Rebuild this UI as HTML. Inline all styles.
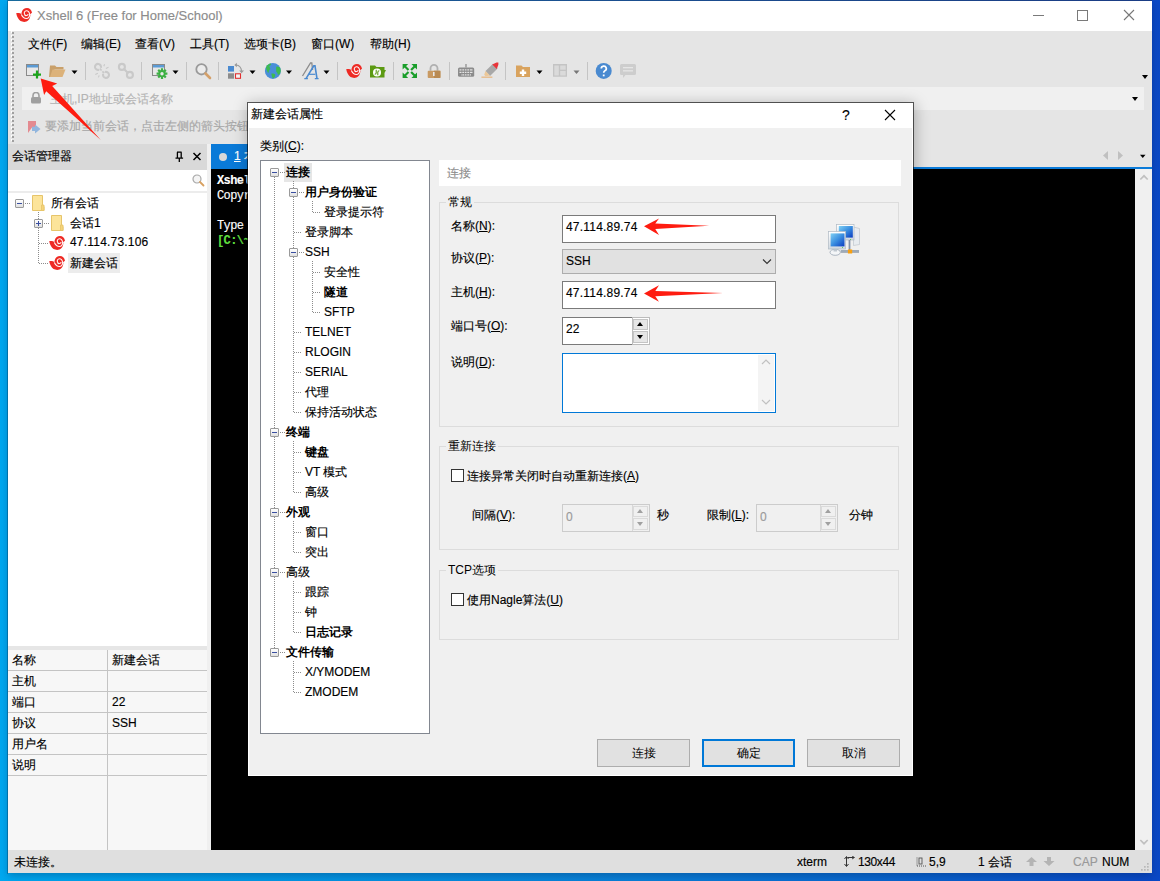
<!DOCTYPE html>
<html><head><meta charset="utf-8">
<style>
*{box-sizing:border-box;margin:0;padding:0}
html,body{width:1160px;height:881px;overflow:hidden}
body{position:relative;font-family:"Liberation Sans",sans-serif;font-size:12px;color:#000;background:linear-gradient(90deg,#00a8f0 0%,#0494e2 30%,#0a80d8 55%,#0a62ce 80%,#0a48c6 100%)}
.a{position:absolute}
.t{position:absolute;white-space:nowrap;line-height:14px;-webkit-text-stroke:0.15px currentColor}
.b{font-weight:bold;-webkit-text-stroke:0}
.g{color:#6d6d6d}
.dd{position:absolute;width:0;height:0;border-left:3px solid transparent;border-right:3px solid transparent;border-top:4px solid #000}
.sep{position:absolute;top:62px;width:1px;height:18px;background:#c4c4c4}
.u{text-decoration:underline}
.vd{position:absolute;width:1px;background:repeating-linear-gradient(180deg,#8c8c8c 0 1px,transparent 1px 2px)}
.hd{position:absolute;height:1px;background:repeating-linear-gradient(90deg,#8c8c8c 0 1px,transparent 1px 2px)}
.ebox{position:absolute;width:9px;height:9px;border:1px solid #9a9a9a;border-radius:1px;background:linear-gradient(180deg,#fff,#e0e0e0)}
.ebox:after{content:"";position:absolute;left:1px;top:3px;width:5px;height:1px;background:#3a4fa0}
.ebox.p:before{content:"";position:absolute;left:3px;top:1px;width:1px;height:5px;background:#3a4fa0}
.grp{position:absolute;border:1px solid #dcdcdc}
.gl{position:absolute;background:#f0f0f0;padding:0 2px;line-height:14px;white-space:nowrap}
.btn{position:absolute;width:93px;height:28px;background:#e1e1e1;border:1px solid #adadad;text-align:center;line-height:26px}
</style></head><body>
<!-- window frame -->
<div class="a" style="left:8px;top:1px;width:1144px;height:872px;background:#e5e5e5;box-shadow:0 3px 8px rgba(0,20,60,0.28)"></div>
<div class="a" style="left:8px;top:0;width:1144px;height:1px;background:linear-gradient(90deg,#176a9c,#1a5090 50%,#1a3c84)"></div>
<div class="a" style="left:7px;top:0;width:1px;height:874px;background:rgba(0,30,60,0.3)"></div>
<!-- title bar -->
<div class="a" style="left:8px;top:1px;width:1144px;height:30px;background:#fff"></div>
<svg class="a" style="left:16px;top:8px" width="16" height="14" viewBox="0 0 16 14"><g id="xsl"><path d="M0.3 5 C1.5 4.9 3 4.9 4 5.3 C4.8 5.6 5.2 6.2 5.5 6.5 C5.4 5.5 5.5 4.8 5.8 4 C6.5 1.6 8.5 0 11 0 C13.5 0 15.5 2 16 4.7 L14 6.2 C14.5 7 14.3 7.6 14.2 8.2 C13.8 11.5 11.5 13.9 8.2 13.9 C5.5 13.9 3.2 12.5 2.1 10.3 C1.2 8.8 0.3 6.5 0.3 5 Z" fill="#ee2a24"/><path d="M5.3 6.4 C6.5 8.8 8.5 10.4 10.3 10.4 C12.5 10.4 13.6 8.5 13.6 6.5 C13.6 4 11.8 2.5 10.3 2.7 C8.8 2.9 8.1 4.5 8.3 5.4 C8.5 6.8 9.5 7.7 10.4 7.6 C11.4 7.5 12.1 6.6 12.1 6" fill="none" stroke="#fff" stroke-width="1.05" opacity="0.95"/></g></svg>
<div class="t" style="left:37px;top:9px;font-size:13px;color:#8c8c8c">Xshell 6 (Free for Home/School)</div>
<div class="a" style="left:1033px;top:15px;width:11px;height:1px;background:#7a7a7a"></div>
<div class="a" style="left:1077px;top:10px;width:11px;height:11px;border:1px solid #7a7a7a"></div>
<svg class="a" style="left:1123px;top:9px" width="12" height="12"><path d="M1 1L11 11M11 1L1 11" stroke="#777" stroke-width="1.1"/></svg>

<!-- grip -->
<div class="a" style="left:11px;top:31px;width:1px;height:110px;background:repeating-linear-gradient(180deg,#fff 0 2px,transparent 2px 4px)"></div>
<div class="a" style="left:12px;top:32px;width:2px;height:110px;background:repeating-linear-gradient(180deg,#a0a0a0 0 2px,transparent 2px 4px)"></div>
<!-- menu bar -->
<div class="t" style="left:28px;top:37px">文件(F)</div>
<div class="t" style="left:81px;top:37px">编辑(E)</div>
<div class="t" style="left:135px;top:37px">查看(V)</div>
<div class="t" style="left:190px;top:37px">工具(T)</div>
<div class="t" style="left:244px;top:37px">选项卡(B)</div>
<div class="t" style="left:311px;top:37px">窗口(W)</div>
<div class="t" style="left:370px;top:37px">帮助(H)</div>
<!-- toolbar icons -->
<svg class="a" style="left:0;top:0" width="700" height="100">
<!-- new session -->
<rect x="26.5" y="64.5" width="12" height="11" fill="#e8e8e8" stroke="#8a8a8a"/>
<rect x="27" y="65" width="11" height="2.5" fill="#5b9bd5"/>
<rect x="33" y="73.5" width="8" height="2.2" fill="#1aa51a"/>
<rect x="35.9" y="70.5" width="2.2" height="8" fill="#1aa51a"/>
<!-- open folder -->
<path d="M50 65.5 h5 l1.5 1.5 h7 v2.5 h-9 l-2.5 7.5 h-3z" fill="#c9a06a"/>
<path d="M52.5 69.5 h13 l-3 7.5 h-12.5z" fill="#dcb27a"/>
<path d="M71.5 70.5 h6 l-3 3.5z" fill="#000"/>
<!-- disconnect -->
<g fill="none" stroke="#c9c9c9" stroke-width="2.1">
<path d="M100.82 67.93 A3 3 0 1 0 99.03 69.72"/><path d="M103.18 73.87 A3 3 0 1 0 104.97 72.08"/>
<path d="M99.8 68.7 l1.8 1.8M104.2 73.1 l-1.8 -1.8" stroke-width="1.7"/>
<path d="M104.6 64.2 l-0.8 2M108.5 67.2 l-2.6 1.2M95.3 74.5 l2.6 -1.2M98.4 77.4 l0.8 -2" stroke-width="1.1"/>
</g>
<!-- link -->
<g fill="none" stroke="#c9c9c9" stroke-width="2.1">
<circle cx="121.9" cy="66.9" r="3"/><circle cx="129.9" cy="74.9" r="3"/><path d="M123.5 68.5 l4.8 4.8"/>
</g>
<!-- session props -->
<rect x="152.5" y="64.5" width="12" height="11" fill="#e8e8e8" stroke="#8a8a8a"/>
<rect x="153" y="65" width="11" height="2.5" fill="#5b9bd5"/>
<g transform="translate(162,73.7)">
<circle r="3.6" fill="#3cb043"/>
<path d="M-1.1 -5.4h2.2v10.8h-2.2zM-5.4 -1.1h10.8v2.2h-10.8z" fill="#3cb043"/>
<path d="M-1.1 -5.4h2.2v10.8h-2.2zM-5.4 -1.1h10.8v2.2h-10.8z" fill="#3cb043" transform="rotate(45)"/>
<circle r="1.7" fill="#e8e8e8"/>
</g>
<path d="M172.5 70.5 h6 l-3 3.5z" fill="#000"/>
<!-- magnifier -->
<circle cx="201.5" cy="69.3" r="5.2" fill="#ececec" stroke="#9a9a9a" stroke-width="1.8"/>
<path d="M205.5 73.5 l4.5 4.5" stroke="#d4a06a" stroke-width="2.6" stroke-linecap="round"/>
<!-- layout -->
<rect x="228" y="66" width="6" height="5.6" fill="#4a8ad0"/>
<rect x="228" y="73.3" width="6" height="5.4" fill="#8c8c8c"/>
<rect x="235.5" y="73.8" width="5" height="4.5" fill="#f4f4f4" stroke="#e03030" stroke-width="1.1"/>
<path d="M236 65 q5 0.5 5.6 6" fill="none" stroke="#9a9a9a" stroke-width="1.2"/>
<path d="M234.3 65 l2.6 -2.2 v4.4z" fill="#9a9a9a"/>
<path d="M239.2 70.6 h4.8 l-2.4 2.6z" fill="#9a9a9a"/>
<path d="M249.5 70.5 h6 l-3 3.5z" fill="#000"/>
<!-- globe -->
<clipPath id="gc"><circle cx="272.9" cy="70.9" r="8"/></clipPath>
<circle cx="272.9" cy="70.9" r="8" fill="#4a8fd9"/>
<g clip-path="url(#gc)" fill="#3dbb4f">
<path d="M266.5 64 c1.5 -0.8 3.5 -1 4.5 -0.5 c0.5 1 -0.5 2 -1.5 2.5 c-0.5 0.8 0.5 1.5 0.8 2.5 c0.2 1 -0.8 1.2 -1.2 2 c-0.3 0.8 -0.2 2 -0.8 2.5 c-0.8 -0.8 -1.5 -2.5 -2 -4 c-0.3 -1.5 -0.2 -3.5 0.2 -5z"/>
<path d="M276.5 66.5 c1.5 0 3 0.5 4 1.5 c0.5 1.5 0.5 3.5 0 5 c-0.8 1 -1.5 1.5 -2.5 2 c-0.5 -0.8 -0.3 -2 -1 -2.5 c-0.8 -0.5 -1 -1.5 -0.8 -2.5 c0.2 -1 -0.5 -1.5 0.3 -3.5z"/>
<path d="M271.5 73.5 c1.2 -0.3 2.8 0 3.5 0.8 c0.5 0.8 0 2 -0.5 3 c-0.5 0.8 -1.2 1 -2 1 c-0.3 -1 -0.5 -2 -0.8 -3 c-0.2 -0.8 -0.5 -1.5 -0.2 -1.8z"/>
</g>
<path d="M286 70.5 h6 l-3 3.5z" fill="#000"/>
<!-- font A -->
<path d="M302.5 76 L310.5 63 L311.8 63 L312.6 70" fill="none" stroke="#8c8c8c" stroke-width="1.3"/>
<path d="M306 78.6 L313.8 65.8 L315 65.8 L317 78.6" fill="none" stroke="#4a8ad0" stroke-width="1.6"/>
<path d="M309 74.3 h6.3" stroke="#4a8ad0" stroke-width="1.2"/>
<path d="M304.3 78.6 h3.6M314.8 78.6 h3.8" stroke="#4a8ad0" stroke-width="1.2"/>
<path d="M323.5 70.5 h6 l-3 3.5z" fill="#000"/>
<!-- xshell -->
<use href="#xsl" transform="translate(346,64)"/>
<!-- xftp -->
<path d="M370 65.5 h5 l1.5 1.5 h8 v3 l1.5 0 l-1.5 3 v4.5 h-14.5z" fill="#5c9a12"/>
<circle cx="377" cy="72.5" r="4" fill="#fff"/>
<path d="M376.2 69.8 v3 a1.5 1.5 0 0 1 -1.5 1.5M377.8 75.2 v-3 a1.5 1.5 0 0 1 1.5 -1.5" fill="none" stroke="#5c9a12" stroke-width="1.1"/>
<!-- fullscreen -->
<g fill="#1a9e2a" stroke="#1a9e2a">
<path d="M402.6 64 h5.6 l-5.6 5.6z" stroke="none"/><path d="M404.5 66 l4 4" stroke-width="2.2" fill="none"/>
<path d="M417 64 h-5.6 l5.6 5.6z" stroke="none"/><path d="M415.1 66 l-4 4" stroke-width="2.2" fill="none"/>
<path d="M402.6 78 h5.6 l-5.6 -5.6z" stroke="none"/><path d="M404.5 76 l4 -4" stroke-width="2.2" fill="none"/>
<path d="M417 78 h-5.6 l5.6 -5.6z" stroke="none"/><path d="M415.1 76 l-4 -4" stroke-width="2.2" fill="none"/>
</g>
<!-- lock -->
<path d="M430.5 70.8 v-2.5 a3.5 3.5 0 0 1 7 0 v2.5" fill="none" stroke="#b0b0b0" stroke-width="1.8"/>
<rect x="427.7" y="70.7" width="12.7" height="7.3" rx="1" fill="#c99a62"/>
<rect x="434" y="70.7" width="6.4" height="7.3" fill="#b98a52"/>
<rect x="433" y="72" width="1.6" height="4" fill="#e8e8e8"/>
<!-- keyboard -->
<path d="M466 64 v3.5" stroke="#808080" stroke-width="1.1"/>
<rect x="458" y="67.6" width="16.2" height="9.2" rx="1.5" fill="#8c8c8c"/>
<g fill="#e6e6e6"><rect x="459.5" y="69.3" width="13" height="1.2"/><rect x="459.5" y="71.8" width="13" height="1.2"/><rect x="461" y="74.3" width="10" height="1.2"/></g>
<g fill="#8c8c8c"><rect x="461.5" y="69" width="0.8" height="6.8"/><rect x="464" y="69" width="0.8" height="6.8"/><rect x="466.5" y="69" width="0.8" height="6.8"/><rect x="469" y="69" width="0.8" height="6.8"/></g>
<!-- highlighter -->
<path d="M485.5 71 L493 63.8 L497.6 68.4 L490 76z" fill="#a8a8a8"/>
<path d="M492.3 64.5 L496.5 62.6 L498.4 62.6 L498.4 64.6 L496.8 69z" fill="#e8343a"/>
<path d="M485.5 71 L490 75.5 L485.5 76.2 L484.2 74.8z" fill="#ecc898"/>
<rect x="481.4" y="76.6" width="11" height="1.1" fill="#e8b070"/>
<!-- folder plus -->
<path d="M516 65.5 h5.5 l1.5 1.5 h7 v10 h-14z" fill="#d9a35e"/>
<path d="M521.8 69.5 h2.4 v2 h2 v2.4 h-2 v2 h-2.4 v-2 h-2 v-2.4 h2z" fill="#fff"/>
<path d="M536.5 70.5 h6 l-3 3.5z" fill="#000"/>
<!-- layout gray -->
<rect x="553" y="64" width="14" height="12.7" fill="#c4c4c4"/>
<rect x="554.3" y="65.5" width="4.5" height="10" fill="#dadada"/>
<rect x="560.2" y="65.5" width="5.5" height="4.2" fill="#dadada"/>
<rect x="560.2" y="71" width="5.5" height="4.5" fill="#dadada"/>
<path d="M573.5 70.5 h6 l-3 3.5z" fill="#777"/>
<!-- help -->
<circle cx="603.7" cy="70.9" r="8" fill="#4a8ad0"/>
<path d="M601.3 68.6 a2.5 2.5 0 1 1 3.6 2.2 c-0.9 0.5 -1.2 1 -1.2 2" fill="none" stroke="#fff" stroke-width="1.7"/>
<rect x="602.8" y="74.5" width="1.8" height="1.8" fill="#fff"/>
<!-- chat -->
<path d="M621.5 64 h13 a1.5 1.5 0 0 1 1.5 1.5 v8 a1.5 1.5 0 0 1 -1.5 1.5 h-9 l-2.5 3 v-3 h-1.5 a1.5 1.5 0 0 1 -1.5 -1.5 v-8 a1.5 1.5 0 0 1 1.5 -1.5z" fill="#cdcdcd"/>
<rect x="623" y="67" width="10" height="1.3" fill="#e6e6e6"/><rect x="623" y="70.2" width="10" height="1.3" fill="#e6e6e6"/>
<!-- overflow -->
</svg>
<div class="sep" style="left:85px"></div>
<div class="sep" style="left:141px"></div>
<div class="sep" style="left:186px"></div>
<div class="sep" style="left:218px"></div>
<div class="sep" style="left:337px"></div>
<div class="sep" style="left:393px"></div>
<div class="sep" style="left:449px"></div>
<div class="sep" style="left:505px"></div>
<div class="sep" style="left:587px"></div>
<div class="dd" style="left:1142px;top:75px"></div>

<!-- address bar -->
<div class="a" style="left:22px;top:87px;width:1122px;height:23px;background:#f0f0f0"></div>
<svg class="a" style="left:30px;top:92px" width="12" height="12"><path d="M3 5 v-1.5 a3 3 0 0 1 6 0 v1.5" fill="none" stroke="#a0a0a0" stroke-width="1.6"/><rect x="1" y="5" width="10" height="6.5" rx="1.5" fill="#a0a0a0"/></svg>
<div class="t" style="left:50px;top:92px;color:#b4b4b4">主机,IP地址或会话名称</div>
<div class="dd" style="left:1132px;top:97px"></div>
<!-- link bar -->
<svg class="a" style="left:28px;top:121px" width="14" height="14"><path d="M0 0 h8 v10 l-4 -3.5 l-4 5.6z" fill="#e38a90"/><path d="M4 5.8 h3 v-2.3 l5.5 4.4 l-5.5 4.7 v-2.5 h-3z" fill="#92b6de"/></svg>
<div class="t" style="left:45px;top:119px;color:#a8a8a8">要添加当前会话，点击左侧的箭头按钮。</div>
<!-- session manager -->
<div class="a" style="left:8px;top:144px;width:199px;height:26px;background:#d9d9d9"></div>
<div class="t" style="left:12px;top:149px">会话管理器</div>
<svg class="a" style="left:174px;top:151px" width="30" height="12"><path d="M3 1.2 h4.6 M3.4 1.2 v5.6 M7.2 1.2 v5.6 M1.5 7.2 h7.6 M5.3 7.2 v3.8" fill="none" stroke="#000" stroke-width="1.3"/><path d="M19.5 2 l7 7 M26.5 2 l-7 7" stroke="#000" stroke-width="1.5"/></svg>
<div class="a" style="left:8px;top:170px;width:199px;height:21px;background:#fff"></div>
<svg class="a" style="left:192px;top:174px" width="13" height="13"><circle cx="5" cy="5" r="4" fill="#f4f4f4" stroke="#a8a8a8" stroke-width="1.2"/><path d="M8 8 l3.5 3.5" stroke="#d8a060" stroke-width="1.8" stroke-linecap="round"/></svg>
<div class="a" style="left:8px;top:191px;width:199px;height:2px;background:#ececec"></div>
<div class="a" style="left:8px;top:193px;width:199px;height:453px;background:#fff"></div>
<!-- tree -->
<div class="ebox" style="left:15px;top:199px"></div>
<div class="hd" style="left:25px;top:203px;width:6px"></div>
<svg class="a" style="left:31px;top:195px" width="16" height="16"><path d="M1.5 0.5 h10 v10 l1.5 1 v4 h-11.5z" fill="#fce49a" stroke="#e6c46a"/><path d="M10.5 10 h2.5 v5.5 h-2.5z" fill="#f6d47a" stroke="#e6c46a" stroke-width="0.8"/></svg>
<div class="t" style="left:51px;top:196px">所有会话</div>
<div class="vd" style="left:38px;top:212px;height:52px"></div>
<div class="ebox p" style="left:34px;top:219px"></div>
<div class="hd" style="left:44px;top:223px;width:6px"></div>
<svg class="a" style="left:51px;top:215px" width="16" height="16"><path d="M0.5 0.5 h10 v10 l1.5 1 v4 h-11.5z" fill="#fce49a" stroke="#e6c46a"/><path d="M9.5 10 h2.5 v5.5 h-2.5z" fill="#f6d47a" stroke="#e6c46a" stroke-width="0.8"/></svg>
<div class="t" style="left:70px;top:216px">会话1</div>
<div class="hd" style="left:39px;top:243px;width:10px"></div>
<svg class="a" style="left:49px;top:236px" width="16" height="14" viewBox="0 0 16 14"><use href="#xsl"/></svg>
<div class="t" style="left:70px;top:235px;letter-spacing:0.2px">47.114.73.106</div>
<div class="hd" style="left:39px;top:263px;width:10px"></div>
<svg class="a" style="left:49px;top:256px" width="16" height="14" viewBox="0 0 16 14"><use href="#xsl"/></svg>
<div class="a" style="left:68px;top:253px;width:52px;height:20px;background:#ececec"></div>
<div class="t" style="left:70px;top:256px">新建会话</div>

<!-- properties grid -->
<div class="a" style="left:8px;top:646px;width:199px;height:4px;background:#e6e6e6"></div>
<div class="a" style="left:8px;top:650px;width:199px;height:200px;background:#f7f7f7"></div>
<div class="a" style="left:107px;top:650px;width:1px;height:200px;background:#c4c4c4"></div>
<div class="a" style="left:8px;top:670px;width:199px;height:1px;background:#c4c4c4"></div>
<div class="a" style="left:8px;top:691px;width:199px;height:1px;background:#c4c4c4"></div>
<div class="a" style="left:8px;top:712px;width:199px;height:1px;background:#c4c4c4"></div>
<div class="a" style="left:8px;top:733px;width:199px;height:1px;background:#c4c4c4"></div>
<div class="a" style="left:8px;top:754px;width:199px;height:1px;background:#c4c4c4"></div>
<div class="a" style="left:8px;top:775px;width:199px;height:1px;background:#c4c4c4"></div>
<div class="t" style="left:12px;top:653px">名称</div><div class="t" style="left:112px;top:653px">新建会话</div>
<div class="t" style="left:12px;top:674px">主机</div>
<div class="t" style="left:12px;top:695px">端口</div><div class="t" style="left:112px;top:695px">22</div>
<div class="t" style="left:12px;top:716px">协议</div><div class="t" style="left:112px;top:716px">SSH</div>
<div class="t" style="left:12px;top:737px">用户名</div>
<div class="t" style="left:12px;top:758px">说明</div>

<!-- splitter -->
<div class="a" style="left:207px;top:144px;width:4px;height:706px;background:#f0f0f0"></div>
<!-- tab bar -->
<div class="a" style="left:211px;top:144px;width:941px;height:24px;background:#e5e5e5"></div>
<div class="a" style="left:211px;top:144px;width:80px;height:24px;background:#0a7ad8"></div>
<div class="a" style="left:219px;top:153px;width:8px;height:8px;border-radius:50%;background:#d8d8d8"></div>
<div class="t" style="left:234px;top:149px;color:#fff"><span class="u">1</span> 本地Shell</div>
<svg class="a" style="left:1100px;top:150px" width="50" height="12"><path d="M8 1 v9 l-5 -4.5z" fill="#c0c0c0"/><path d="M18 1 v9 l5 -4.5z" fill="#c0c0c0"/><path d="M40 4.7 h5.5 l-2.75 3.3z" fill="#000"/></svg>
<div class="a" style="left:211px;top:167px;width:941px;height:2px;background:#0a7ad8"></div>
<!-- terminal -->
<div class="a" style="left:211px;top:169px;width:924px;height:681px;background:#000"></div>
<div class="t" style="left:217px;top:174px;font-family:'Liberation Mono',monospace;font-size:12px;letter-spacing:-0.6px;line-height:15px;color:#fff;white-space:pre"><b>Xshell 6 (Build 0189)</b>
Copyright (c) 2002 NetSarang Computer, Inc. All rights reserved.

Type `help' to learn how to use Xshell prompt.
<span style="color:#5fdf3f;font-weight:bold">[C:\~]$</span></div>
<div class="a" style="left:1135px;top:169px;width:17px;height:681px;background:#f0f0f0"></div>
<svg class="a" style="left:1138px;top:172px" width="12" height="678"><path d="M2.3 7.5 l3.7 -3.7 l3.7 3.7" fill="none" stroke="#c0c0c0" stroke-width="1.7"/><path d="M2.3 668 l3.7 3.7 l3.7 -3.7" fill="none" stroke="#c0c0c0" stroke-width="1.7"/></svg>
<!-- status bar -->
<div class="a" style="left:8px;top:850px;width:1144px;height:23px;background:#dfdfdf"></div>
<div class="t" style="left:14px;top:855px">未连接。</div>
<div class="t" style="left:797px;top:855px">xterm</div>
<svg class="a" style="left:844px;top:856px" width="12" height="12"><path d="M2.5 1 v9" stroke="#333" stroke-width="1"/><path d="M0.5 3 l2 -2.5 l2 2.5M0.5 8 l2 2.5 l2 -2.5" fill="none" stroke="#333" stroke-width="1"/><path d="M4 1.5 h6" stroke="#333"/><path d="M8 0 l2.5 1.5 l-2.5 1.5" fill="none" stroke="#333" stroke-width="0.9"/></svg>
<div class="t" style="left:858px;top:855px;letter-spacing:-0.4px">130x44</div>
<svg class="a" style="left:916px;top:857px" width="12" height="10"><path d="M1 0.5 v8.5 M1 9 h10" stroke="#555" stroke-dasharray="1 1"/><rect x="3" y="1" width="3" height="6" fill="none" stroke="#555" stroke-width="0.9"/></svg>
<div class="t" style="left:929px;top:855px">5,9</div>
<div class="t" style="left:978px;top:855px">1 会话</div>
<svg class="a" style="left:1026px;top:857px" width="30" height="10"><path d="M5.5 0 l5.5 5 h-3.5 v4 h-4 v-4 h-3.5z" fill="#b4b4b4"/><path d="M23 9 l5.5 -5 h-3.5 v-4 h-4 v4 h-3.5z" fill="#b4b4b4"/></svg>
<div class="t" style="left:1073px;top:855px;color:#999">CAP</div>
<div class="t" style="left:1102px;top:855px">NUM</div>
<svg class="a" style="left:1141px;top:863px" width="10" height="10"><g fill="#b8b8b8"><rect x="6" y="0" width="1.7" height="1.7"/><rect x="3" y="3" width="1.7" height="1.7"/><rect x="6" y="3" width="1.7" height="1.7"/><rect x="0" y="6" width="1.7" height="1.7"/><rect x="3" y="6" width="1.7" height="1.7"/><rect x="6" y="6" width="1.7" height="1.7"/></g></svg>
<!-- dialog -->
<div class="a" style="left:247px;top:102px;width:667px;height:675px;background:#f0f0f0;background-clip:padding-box;border:1px solid rgba(0,0,0,0.62);box-shadow:1px 2px 14px rgba(0,0,0,0.28)"></div>
<div class="a" style="left:248px;top:128px;width:1px;height:648px;background:#fff"></div>
<div class="a" style="left:912px;top:128px;width:1px;height:648px;background:#fff"></div>
<div class="a" style="left:248px;top:775px;width:665px;height:1px;background:#fff"></div>
<div class="a" style="left:248px;top:103px;width:665px;height:25px;background:#fff"></div>
<div class="t" style="left:251px;top:107px">新建会话属性</div>
<div class="t" style="left:842px;top:108px;font-size:14px">?</div>
<svg class="a" style="left:884px;top:109px" width="12" height="12"><path d="M1 1L11 11M11 1L1 11" stroke="#000" stroke-width="1.1"/></svg>
<div class="t" style="left:260px;top:139px">类别(<span class="u">C</span>):</div>
<!-- tree box -->
<div class="a" style="left:260px;top:160px;width:170px;height:574px;background:#fff;border:1px solid #828790"></div>
<div class="a" style="left:284px;top:163px;width:28px;height:19px;background:#e6e6e6"></div>
<div class="vd" style="left:274px;top:177px;height:471px"></div>
<div class="vd" style="left:293px;top:181px;height:232px"></div>
<div class="vd" style="left:293px;top:441px;height:52px"></div>
<div class="vd" style="left:293px;top:521px;height:32px"></div>
<div class="vd" style="left:293px;top:581px;height:52px"></div>
<div class="vd" style="left:293px;top:661px;height:32px"></div>
<div class="vd" style="left:312px;top:201px;height:12px"></div>
<div class="vd" style="left:312px;top:261px;height:52px"></div>
<div class="ebox" style="left:270px;top:168px"></div>
<div class="hd" style="left:280px;top:172px;width:5px"></div>
<div class="t b" style="left:286px;top:165px">连接</div>
<div class="ebox" style="left:289px;top:188px"></div>
<div class="hd" style="left:299px;top:192px;width:5px"></div>
<div class="t b" style="left:305px;top:185px">用户身份验证</div>
<div class="hd" style="left:313px;top:212px;width:8px"></div>
<div class="t" style="left:324px;top:205px">登录提示符</div>
<div class="hd" style="left:294px;top:232px;width:8px"></div>
<div class="t" style="left:305px;top:225px">登录脚本</div>
<div class="ebox" style="left:289px;top:248px"></div>
<div class="hd" style="left:299px;top:252px;width:5px"></div>
<div class="t" style="left:305px;top:245px">SSH</div>
<div class="hd" style="left:313px;top:272px;width:8px"></div>
<div class="t" style="left:324px;top:265px">安全性</div>
<div class="hd" style="left:313px;top:292px;width:8px"></div>
<div class="t b" style="left:324px;top:285px">隧道</div>
<div class="hd" style="left:313px;top:312px;width:8px"></div>
<div class="t" style="left:324px;top:305px">SFTP</div>
<div class="hd" style="left:294px;top:332px;width:8px"></div>
<div class="t" style="left:305px;top:325px">TELNET</div>
<div class="hd" style="left:294px;top:352px;width:8px"></div>
<div class="t" style="left:305px;top:345px">RLOGIN</div>
<div class="hd" style="left:294px;top:372px;width:8px"></div>
<div class="t" style="left:305px;top:365px">SERIAL</div>
<div class="hd" style="left:294px;top:392px;width:8px"></div>
<div class="t" style="left:305px;top:385px">代理</div>
<div class="hd" style="left:294px;top:412px;width:8px"></div>
<div class="t" style="left:305px;top:405px">保持活动状态</div>
<div class="ebox" style="left:270px;top:428px"></div>
<div class="hd" style="left:280px;top:432px;width:5px"></div>
<div class="t b" style="left:286px;top:425px">终端</div>
<div class="hd" style="left:294px;top:452px;width:8px"></div>
<div class="t b" style="left:305px;top:445px">键盘</div>
<div class="hd" style="left:294px;top:472px;width:8px"></div>
<div class="t" style="left:305px;top:465px">VT 模式</div>
<div class="hd" style="left:294px;top:492px;width:8px"></div>
<div class="t" style="left:305px;top:485px">高级</div>
<div class="ebox" style="left:270px;top:508px"></div>
<div class="hd" style="left:280px;top:512px;width:5px"></div>
<div class="t b" style="left:286px;top:505px">外观</div>
<div class="hd" style="left:294px;top:532px;width:8px"></div>
<div class="t" style="left:305px;top:525px">窗口</div>
<div class="hd" style="left:294px;top:552px;width:8px"></div>
<div class="t" style="left:305px;top:545px">突出</div>
<div class="ebox" style="left:270px;top:568px"></div>
<div class="hd" style="left:280px;top:572px;width:5px"></div>
<div class="t" style="left:286px;top:565px">高级</div>
<div class="hd" style="left:294px;top:592px;width:8px"></div>
<div class="t" style="left:305px;top:585px">跟踪</div>
<div class="hd" style="left:294px;top:612px;width:8px"></div>
<div class="t" style="left:305px;top:605px">钟</div>
<div class="hd" style="left:294px;top:632px;width:8px"></div>
<div class="t b" style="left:305px;top:625px">日志记录</div>
<div class="ebox" style="left:270px;top:648px"></div>
<div class="hd" style="left:280px;top:652px;width:5px"></div>
<div class="t b" style="left:286px;top:645px">文件传输</div>
<div class="hd" style="left:294px;top:672px;width:8px"></div>
<div class="t" style="left:305px;top:665px">X/YMODEM</div>
<div class="hd" style="left:294px;top:692px;width:8px"></div>
<div class="t" style="left:305px;top:685px">ZMODEM</div>
<!-- right panel -->
<div class="a" style="left:439px;top:160px;width:462px;height:26px;background:#fff"></div>
<div class="t" style="left:447px;top:166px;color:#8c8c8c">连接</div>
<!-- group 常规 -->
<div class="grp" style="left:439px;top:202px;width:460px;height:225px"></div>
<div class="gl" style="left:446px;top:195px">常规</div>
<div class="t" style="left:451px;top:219px">名称(<span class="u">N</span>):</div>
<div class="a" style="left:562px;top:215px;width:214px;height:28px;background:#fff;border:1px solid #7a7a7a"></div>
<div class="t" style="left:566px;top:220px;letter-spacing:0.2px">47.114.89.74</div>
<div class="t" style="left:451px;top:251px">协议(<span class="u">P</span>):</div>
<div class="a" style="left:562px;top:249px;width:214px;height:25px;background:#e1e1e1;border:1px solid #adadad"></div>
<div class="t" style="left:566px;top:254px">SSH</div>
<svg class="a" style="left:762px;top:258px" width="10" height="8"><path d="M1 1.5 l4 4 l4 -4" fill="none" stroke="#333" stroke-width="1.1"/></svg>
<div class="t" style="left:451px;top:285px">主机(<span class="u">H</span>):</div>
<div class="a" style="left:562px;top:281px;width:214px;height:28px;background:#fff;border:1px solid #7a7a7a"></div>
<div class="t" style="left:566px;top:286px;letter-spacing:0.2px">47.114.89.74</div>
<div class="t" style="left:451px;top:319px">端口号(<span class="u">O</span>):</div>
<div class="a" style="left:562px;top:317px;width:88px;height:28px;background:#fff;border:1px solid #7a7a7a;border-right-color:#bcbcbc"></div>
<div class="a" style="left:632px;top:317px;width:18px;height:28px;border:1px solid #bcbcbc;background:#fff"></div>
<div class="a" style="left:633px;top:319px;width:15px;height:11px;background:#e6e6e6;border:1px solid #c4c4c4"></div>
<div class="a" style="left:633px;top:331px;width:15px;height:12px;background:#e6e6e6;border:1px solid #c4c4c4"></div>
<div class="dd" style="left:637px;top:322px;border-top:none;border-bottom:4px solid #000"></div>
<div class="dd" style="left:637px;top:335px"></div>
<div class="t" style="left:566px;top:322px">22</div>
<div class="t" style="left:451px;top:355px">说明(<span class="u">D</span>):</div>
<div class="a" style="left:562px;top:353px;width:214px;height:60px;background:#fff;border:1px solid #0078d7"></div>
<div class="a" style="left:758px;top:355px;width:16px;height:56px;background:#f4f4f4"></div>
<svg class="a" style="left:760px;top:357px" width="12" height="52"><path d="M2 7 l4 -4 l4 4" fill="none" stroke="#c0c0c0" stroke-width="1.2"/><path d="M2 43 l4 4 l4 -4" fill="none" stroke="#c0c0c0" stroke-width="1.2"/></svg>
<!-- computer icon -->
<svg class="a" style="left:828px;top:224px" width="32" height="32">
<defs><linearGradient id="scr" x1="0" y1="0" x2="1" y2="1"><stop offset="0" stop-color="#7fd0f4"/><stop offset="0.5" stop-color="#3a8ee0"/><stop offset="1" stop-color="#0a3cc0"/></linearGradient>
<linearGradient id="frm" x1="0" y1="0" x2="0" y2="1"><stop offset="0" stop-color="#ffffff"/><stop offset="1" stop-color="#d0d8e0"/></linearGradient></defs>
<path d="M25.5 3 L31.5 4.5 V20.5 L25.5 21.5z" fill="#e8ecf0" stroke="#b8c0c8" stroke-width="0.6"/>
<rect x="8.5" y="0.5" width="17.5" height="15.5" fill="url(#frm)" stroke="#b0bac4" stroke-width="0.7"/>
<rect x="10.8" y="2" width="14" height="11.6" fill="url(#scr)"/>
<path d="M21.5 16 v10" stroke="#8494aa" stroke-width="1.8"/>
<path d="M12.8 27.3 H31" stroke="#7a8898" stroke-width="2.6"/>
<path d="M12.8 27 H31" stroke="#d8e0e8" stroke-width="0.8"/>
<ellipse cx="7.2" cy="28.3" rx="5.2" ry="3" fill="#f4f6f8" stroke="#9aa6b4" stroke-width="0.8"/>
<rect x="5.5" y="24.5" width="3.5" height="3" fill="#c0c8d0"/>
<rect x="0.5" y="7.5" width="17" height="17.5" fill="url(#frm)" stroke="#b0bac4" stroke-width="0.7"/>
<rect x="2.6" y="9.4" width="13.9" height="13" fill="url(#scr)"/>
<rect x="19.9" y="25.5" width="4.3" height="4" fill="#f8a010"/>
<rect x="14" y="23" width="1" height="1" fill="#60d060"/>
<rect x="22" y="15" width="1" height="1" fill="#60d060"/>
</svg>
<!-- group 重新连接 -->
<div class="grp" style="left:439px;top:446px;width:460px;height:104px"></div>
<div class="gl" style="left:446px;top:439px">重新连接</div>
<div class="a" style="left:451px;top:469px;width:13px;height:13px;background:#fff;border:1px solid #333"></div>
<div class="t" style="left:467px;top:469px">连接异常关闭时自动重新连接(<span class="u">A</span>)</div>
<div class="t" style="left:472px;top:508px">间隔(<span class="u">V</span>):</div>
<div class="a" style="left:562px;top:504px;width:88px;height:28px;background:#f0f0f0;border:1px solid #cccccc"></div>
<div class="a" style="left:632px;top:505px;width:17px;height:26px;border-left:1px solid #d8d8d8"></div>
<div class="a" style="left:633px;top:506px;width:15px;height:11px;background:#f0f0f0;border:1px solid #dadada"></div>
<div class="a" style="left:633px;top:518px;width:15px;height:12px;background:#f0f0f0;border:1px solid #dadada"></div>
<div class="dd" style="left:637px;top:509px;border-top:none;border-bottom:4px solid #a0a0a0"></div>
<div class="dd" style="left:637px;top:522px;border-top-color:#a0a0a0"></div>
<div class="t" style="left:566px;top:510px;color:#9a9a9a">0</div>
<div class="t" style="left:657px;top:508px">秒</div>
<div class="t" style="left:707px;top:508px">限制(<span class="u">L</span>):</div>
<div class="a" style="left:756px;top:504px;width:82px;height:28px;background:#f0f0f0;border:1px solid #cccccc"></div>
<div class="a" style="left:820px;top:505px;width:17px;height:26px;border-left:1px solid #d8d8d8"></div>
<div class="a" style="left:821px;top:506px;width:15px;height:11px;background:#f0f0f0;border:1px solid #dadada"></div>
<div class="a" style="left:821px;top:518px;width:15px;height:12px;background:#f0f0f0;border:1px solid #dadada"></div>
<div class="dd" style="left:825px;top:509px;border-top:none;border-bottom:4px solid #a0a0a0"></div>
<div class="dd" style="left:825px;top:522px;border-top-color:#a0a0a0"></div>
<div class="t" style="left:760px;top:510px;color:#9a9a9a">0</div>
<div class="t" style="left:849px;top:508px">分钟</div>
<!-- group TCP -->
<div class="grp" style="left:439px;top:570px;width:460px;height:70px"></div>
<div class="gl" style="left:446px;top:563px">TCP选项</div>
<div class="a" style="left:451px;top:593px;width:13px;height:13px;background:#fff;border:1px solid #333"></div>
<div class="t" style="left:467px;top:593px">使用Nagle算法(<span class="u">U</span>)</div>
<!-- buttons -->
<div class="btn" style="left:597px;top:739px">连接</div>
<div class="btn" style="left:702px;top:739px;border:2px solid #0078d7;line-height:24px">确定</div>
<div class="btn" style="left:807px;top:739px">取消</div>

<!-- red arrows -->
<svg class="a" style="left:0;top:0" width="1160" height="881">
<path d="M40.7 78.6 L57.2 83.6 L52.2 86 L100.8 140 L46.2 91.2 L44.1 95 Z" fill="#fe1c10"/>
<path d="M644 226.3 L659 218.4 L655.3 223.6 L709.1 225.7 L655.3 229 L659 235 Z" fill="#fe1c10"/>
<path d="M644 293.6 L659 285.3 L655.3 290.9 L723 293 L655.3 296.3 L659 301.8 Z" fill="#fe1c10"/>
</svg>
</body></html>
